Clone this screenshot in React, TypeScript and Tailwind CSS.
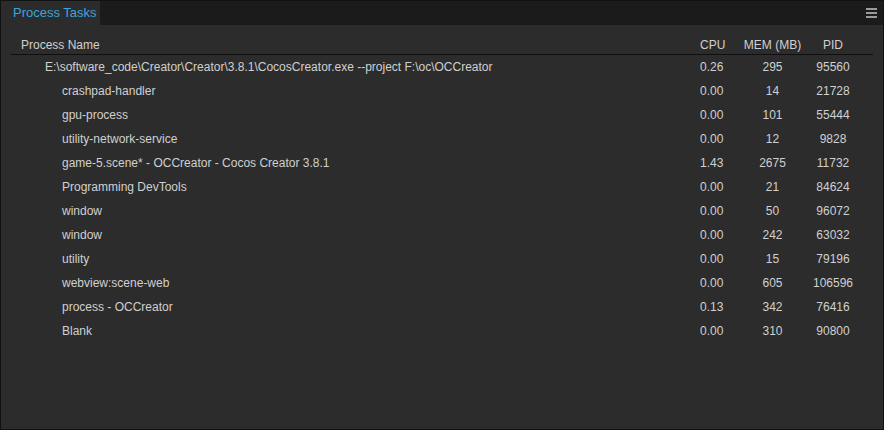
import React from "react";

const rows: { name: string; cpu: string; mem: string; pid: string; child: boolean }[] = [
  { name: "E:\\software_code\\Creator\\Creator\\3.8.1\\CocosCreator.exe --project F:\\oc\\OCCreator", cpu: "0.26", mem: "295", pid: "95560", child: false },
  { name: "crashpad-handler", cpu: "0.00", mem: "14", pid: "21728", child: true },
  { name: "gpu-process", cpu: "0.00", mem: "101", pid: "55444", child: true },
  { name: "utility-network-service", cpu: "0.00", mem: "12", pid: "9828", child: true },
  { name: "game-5.scene* - OCCreator - Cocos Creator 3.8.1", cpu: "1.43", mem: "2675", pid: "11732", child: true },
  { name: "Programming DevTools", cpu: "0.00", mem: "21", pid: "84624", child: true },
  { name: "window", cpu: "0.00", mem: "50", pid: "96072", child: true },
  { name: "window", cpu: "0.00", mem: "242", pid: "63032", child: true },
  { name: "utility", cpu: "0.00", mem: "15", pid: "79196", child: true },
  { name: "webview:scene-web", cpu: "0.00", mem: "605", pid: "106596", child: true },
  { name: "process - OCCreator", cpu: "0.13", mem: "342", pid: "76416", child: true },
  { name: "Blank", cpu: "0.00", mem: "310", pid: "90800", child: true },
];

export default function App() {
  return (
    <div
      className="w-[884px] h-[430px] bg-[#111] p-px flex flex-col text-[12px] text-[#d0d0d0]"
      style={{ fontFamily: '"Liberation Sans", Arial, sans-serif' }}
    >
      <div className="h-[24px] bg-[#1b1b1b] flex items-stretch">
        <div className="w-[99px] bg-[#2c2c2c] flex items-center pl-[12px] text-[#3aa6dc] text-[13px]">
          Process Tasks
        </div>
        <div className="flex-1" />
        <div className="w-[11px] flex flex-col items-start justify-center gap-[2px] mr-[6px]">
          <div className="w-[11px] h-[2px] bg-[#9a9a9a]" />
          <div className="w-[11px] h-[2px] bg-[#9a9a9a]" />
          <div className="w-[11px] h-[2px] bg-[#9a9a9a]" />
        </div>
      </div>
      <div className="flex-1 bg-[#2c2c2c] pt-[12px] px-[10px]">
        <div className="flex items-center h-[18px] border-b border-[#0f0f0f] pb-[2px]">
          <div className="flex-1 pl-[10px]">Process Name</div>
          <div className="w-[40px]">CPU</div>
          <div className="w-[65px] text-center">MEM (MB)</div>
          <div className="w-[58px] text-center pr-[2px]">PID</div>
          <div className="w-[10px]" />
        </div>
        <div>
          {rows.map((r, i) => (
            <div key={i} className="flex items-center h-[24px] pb-[1px]">
              <div className={r.child ? "flex-1 pl-[51px] truncate" : "flex-1 pl-[34px] truncate"}>{r.name}</div>
              <div className="w-[40px]">{r.cpu}</div>
              <div className="w-[65px] text-center">{r.mem}</div>
              <div className="w-[58px] text-center pr-[2px]">{r.pid}</div>
              <div className="w-[10px]" />
            </div>
          ))}
        </div>
      </div>
    </div>
  );
}
